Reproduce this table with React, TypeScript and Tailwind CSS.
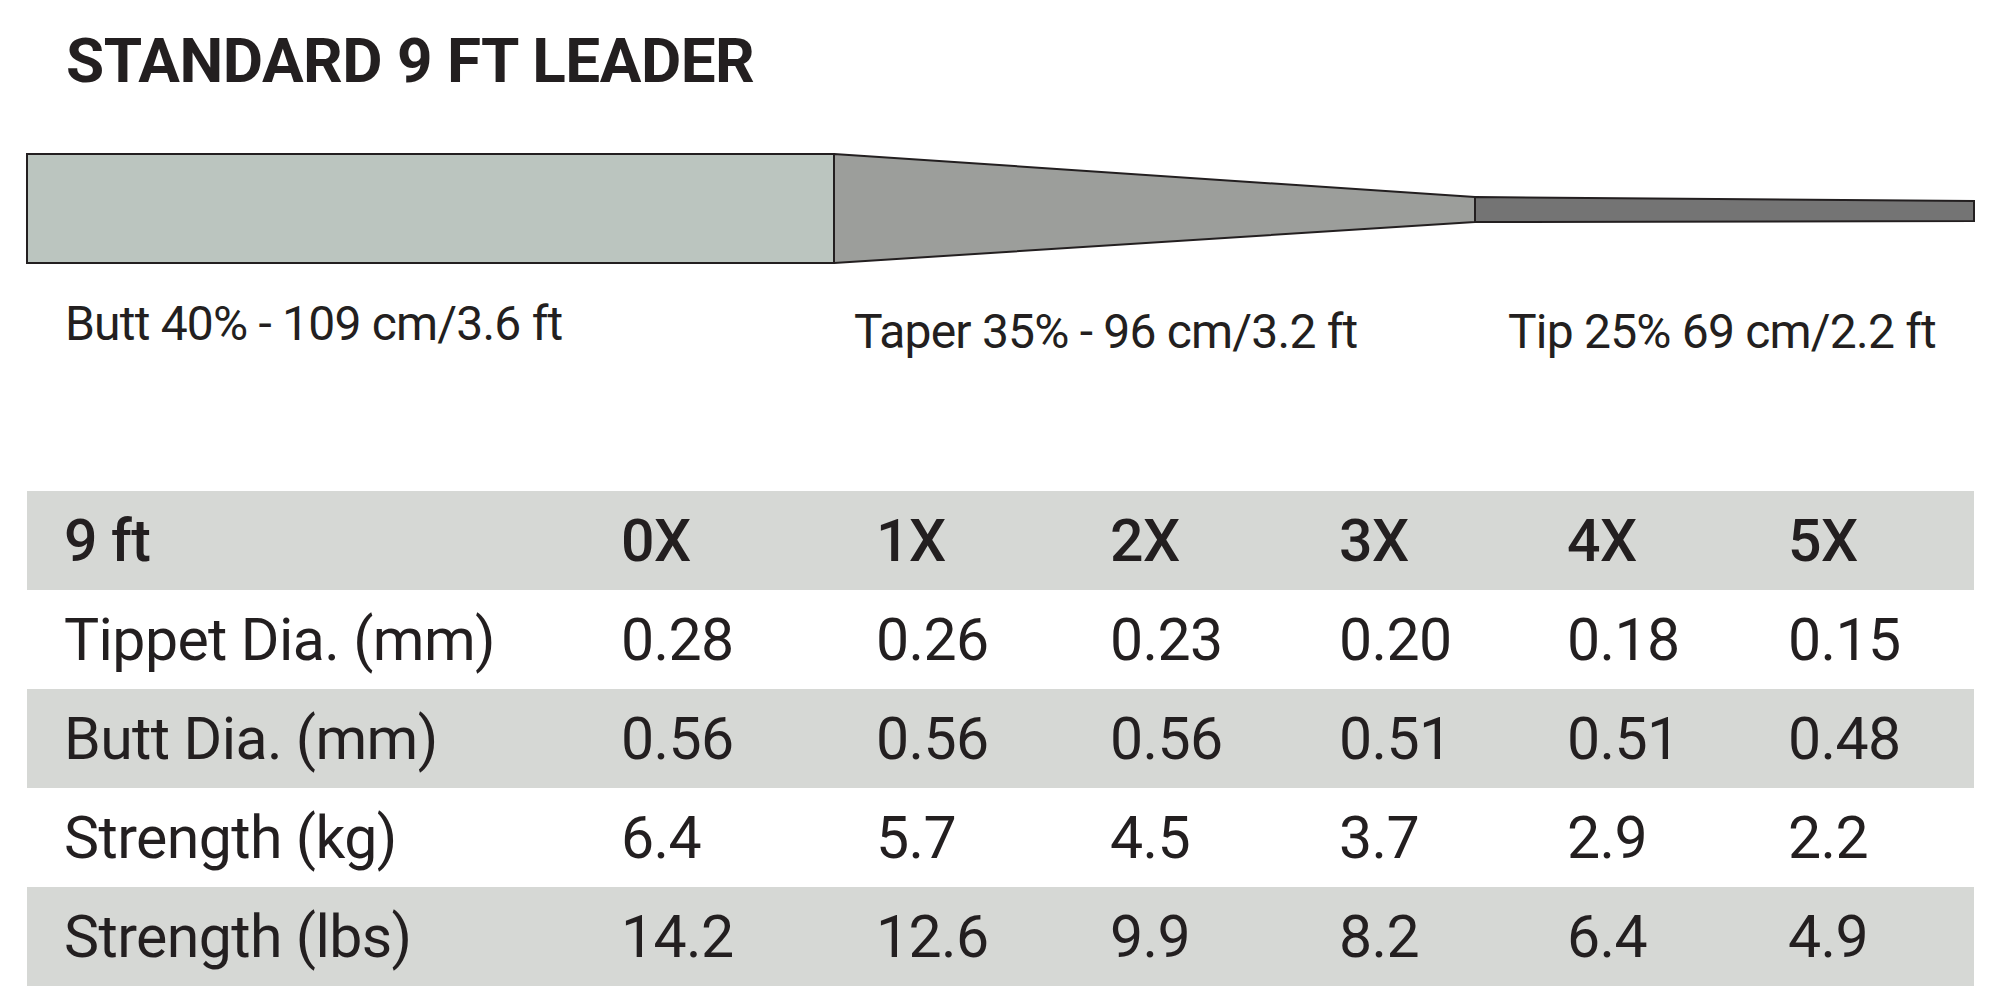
const columns = ["0X", "1X", "2X", "3X", "4X", "5X"];

const rows = [
  { label: "Tippet Dia. (mm)", values: ["0.28", "0.26", "0.23", "0.20", "0.18", "0.15"] },
  { label: "Butt Dia. (mm)", values: ["0.56", "0.56", "0.56", "0.51", "0.51", "0.48"] },
  { label: "Strength (kg)", values: ["6.4", "5.7", "4.5", "3.7", "2.9", "2.2"] },
  { label: "Strength (lbs)", values: ["14.2", "12.6", "9.9", "8.2", "6.4", "4.9"] },
];

function LeaderDiagram() {
  return (
    <svg width="2000" height="140" viewBox="0 140 2000 140" className="block">
      <rect x="27" y="154" width="807" height="109" fill="#bbc5bf" stroke="#231f20" strokeWidth="2" />
      <polygon points="834,154 1475,197 1475,222 834,263" fill="#9c9e9b" stroke="#231f20" strokeWidth="2" strokeLinejoin="round" />
      <polygon points="1475,197 1974,201 1974,221 1475,222" fill="#747474" stroke="#231f20" strokeWidth="2" />
    </svg>
  );
}

function Row({ label, values, shaded, header }: { label: string; values: string[]; shaded: boolean; header?: boolean }) {
  return (
    <div
      className={`grid h-[99px] grid-cols-[557px_255px_234px_229px_228px_221px_1fr] items-center pl-[37px] ${
        shaded ? "bg-[#d6d8d5]" : "bg-white"
      } ${header ? "font-medium" : "font-normal"}`}
    >
      <span>{label}</span>
      {values.map((v, i) => (
        <span key={i}>{v}</span>
      ))}
    </div>
  );
}

export default function App() {
  return (
    <main className="h-[1007px] w-[2000px] overflow-hidden bg-white font-[Roboto,'Noto_Sans',sans-serif] text-[#231f20]">
      <h1 className="ml-[66px] mt-[30px] text-[62px] font-bold leading-none tracking-[-0.5px]">STANDARD 9 FT LEADER</h1>

      <div className="mt-[48px]">
        <LeaderDiagram />
      </div>

      <div className="mt-[20px] flex h-[60px] items-start text-[48px] leading-none tracking-[-0.8px]">
        <span className="ml-[65px] w-[789px]">Butt 40% - 109 cm/3.6 ft</span>
        <span className="mt-[8px] w-[654px]">Taper 35% - 96 cm/3.2 ft</span>
        <span className="mt-[8px]">Tip 25% 69 cm/2.2 ft</span>
      </div>

      <section className="ml-[27px] mt-[131px] w-[1947px] text-[59px] leading-none tracking-[-0.6px]">
        <Row label="9 ft" values={columns} shaded header />
        {rows.map((r, i) => (
          <Row key={r.label} label={r.label} values={r.values} shaded={i % 2 === 1} />
        ))}
      </section>
    </main>
  );
}
